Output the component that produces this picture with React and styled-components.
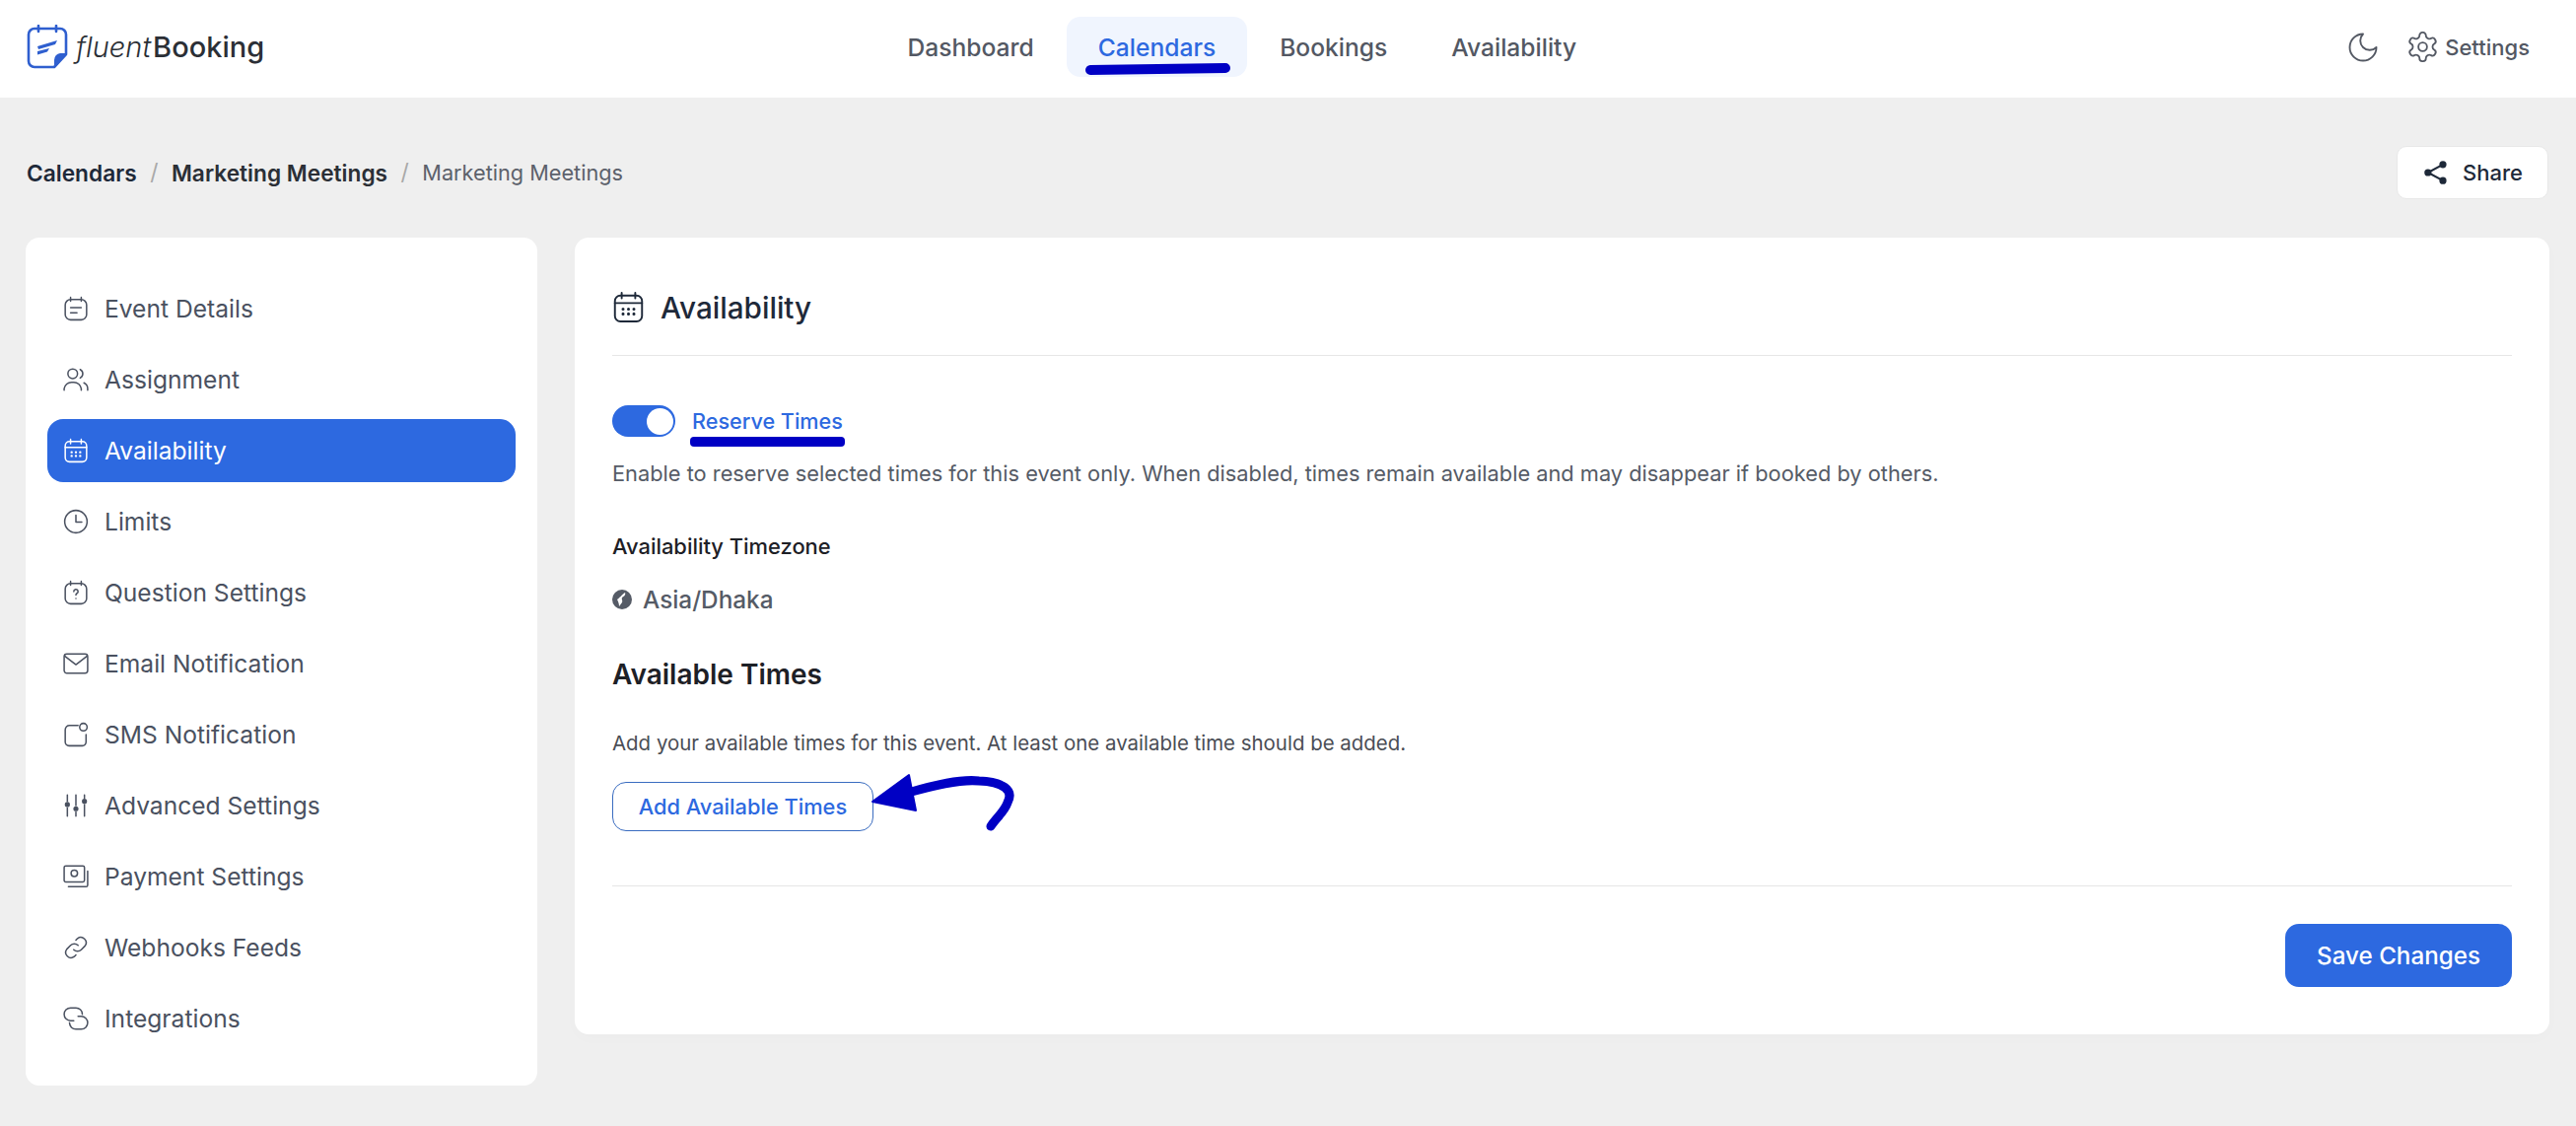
import React from "react";
import styled, { createGlobalStyle } from "styled-components";

const GlobalStyle = createGlobalStyle`
  * { box-sizing: border-box; }
  html, body { margin: 0; padding: 0; }
  body {
    background: #efefef;
    font-family: Inter, "Liberation Sans", sans-serif;
    color: #1e2939;
    -webkit-font-smoothing: antialiased;
  }
`;

const BLUE = "#2d69e0";
const MARK = "#0000c4";

const Page = styled.div`
  width: 2613px;
  min-height: 1142px;
`;

const Header = styled.header`
  height: 99px;
  background: #fff;
  display: flex;
  align-items: center;
  padding: 0 47px 4px 27px;
`;

const Logo = styled.div`
  display: flex;
  align-items: center;
  width: 241px;
  gap: 8px;
  svg { flex: none; }
`;

const LogoText = styled.span`
  font-size: 29px;
  font-weight: 500;
  color: #2b2f36;
  white-space: nowrap;
  em {
    font-weight: 300;
    font-style: italic;
    margin-right: 2px;
  }
`;

const Nav = styled.nav`
  display: flex;
  gap: 2px;
  margin-left: 621px;
`;

const NavItem = styled.a`
  position: relative;
  height: 61px;
  padding: 0 31.5px;
  display: flex;
  align-items: center;
  border-radius: 14px;
  font-size: 24.6px;
  font-weight: 500;
  color: ${(p) => (p.$active ? BLUE : "#535863")};
  background: ${(p) => (p.$active ? "#f0f5fe" : "transparent")};
`;

const NavMark = styled.span`
  position: absolute;
  left: 19px;
  right: 16px;
  top: 48px;
  height: 10px;
  background: ${MARK};
  border-radius: 5px;
  transform: rotate(-0.8deg);
`;

const HeaderRight = styled.div`
  margin-left: auto;
  display: flex;
  align-items: center;
  gap: 25px;
  color: #535863;
  svg { display: block; }
`;

const SettingsLink = styled.a`
  display: flex;
  align-items: center;
  gap: 5px;
  font-size: 22px;
  font-weight: 500;
`;

const CrumbRow = styled.div`
  display: flex;
  align-items: center;
  justify-content: space-between;
  margin: 49px 28px 39px 27px;
  height: 54px;
`;

const Crumbs = styled.div`
  display: flex;
  align-items: center;
`;

const Crumb = styled.span`
  font-size: ${(p) => (p.$plain ? 21.7 : 22.7)}px;
  font-weight: ${(p) => (p.$plain ? 400 : 600)};
  color: ${(p) => p.$color};
`;

const Slash = styled.span`
  color: #a9a9a9;
  font-size: 23px;
  margin: 0 13.5px;
`;

const ShareButton = styled.button`
  width: 154px;
  height: 54px;
  border: 1px solid #e8e8e8;
  border-radius: 10px;
  background: #fff;
  display: flex;
  align-items: center;
  justify-content: center;
  gap: 13px;
  font: 500 22px Inter, sans-serif;
  color: #1e2939;
`;

const Columns = styled.div`
  display: flex;
  gap: 38px;
  align-items: flex-start;
  padding: 0 27px 0 26px;
`;

const Sidebar = styled.aside`
  width: 519px;
  flex: none;
  background: #fff;
  border-radius: 14px;
  padding: 40px 22px 36px;
  display: flex;
  flex-direction: column;
  gap: 8px;
`;

const MenuItem = styled.a`
  height: 64px;
  display: flex;
  align-items: center;
  gap: 16px;
  padding-left: 16px;
  border-radius: 16px;
  font-size: 24.6px;
  color: ${(p) => (p.$active ? "#fff" : "#4a5160")};
  background: ${(p) => (p.$active ? BLUE : "transparent")};
  svg { flex: none; }
`;

const Main = styled.section`
  flex: 1;
  background: #fff;
  border-radius: 14px;
  padding: 38px 38px 48px;
  box-shadow: 0 4px 16px rgba(0, 0, 0, 0.015);
`;

const TitleRow = styled.div`
  height: 82px;
  padding-bottom: 16px;
  display: flex;
  align-items: center;
  gap: 16px;
  border-bottom: 1px solid #e6e6e6;
  color: #1e2939;
`;

const Title = styled.h2`
  margin: 0;
  font-size: 29.7px;
  font-weight: 500;
`;

const ToggleRow = styled.div`
  margin-top: 50px;
  display: flex;
  align-items: center;
  gap: 17px;
  height: 32px;
`;

const Toggle = styled.span`
  width: 64px;
  height: 32px;
  border-radius: 16px;
  background: ${BLUE};
  display: flex;
  align-items: center;
  justify-content: flex-end;
  padding-right: 2px;
  &::after {
    content: "";
    width: 27px;
    height: 27px;
    border-radius: 50%;
    background: #fff;
  }
`;

const ToggleLabel = styled.span`
  position: relative;
  font-size: 21.6px;
  font-weight: 500;
  color: ${BLUE};
  line-height: 32px;
`;

const LabelMark = styled.span`
  position: absolute;
  left: -2px;
  right: -2px;
  top: 32px;
  height: 10px;
  background: ${MARK};
  border-radius: 4px;
`;

const Help = styled.p`
  margin: ${(p) => p.$top}px 0 0;
  font-size: ${(p) => p.$size}px;
  line-height: 36px;
  color: ${(p) => p.$color || "#555b66"};
`;

const FieldLabel = styled.div`
  margin-top: 38px;
  font-size: 21.9px;
  line-height: 36px;
  font-weight: 500;
  color: #1d2026;
`;

const Timezone = styled.div`
  margin-top: 18px;
  display: flex;
  align-items: center;
  gap: 11px;
  font-size: 24.3px;
  line-height: 36px;
  font-weight: 500;
  color: #555b66;
`;

const SectionTitle = styled.h3`
  margin: 38px 0 0;
  font-size: 28px;
  line-height: 40px;
  font-weight: 600;
  color: #1d2026;
`;

const AddWrap = styled.div`
  position: relative;
  margin-top: 21px;
  width: 265px;
`;

const AddButton = styled.button`
  width: 265px;
  height: 50px;
  border: 1px solid #3a6cc0;
  border-radius: 14px;
  background: #fff;
  font: 500 21.8px Inter, sans-serif;
  color: ${BLUE};
`;

const Arrow = styled.svg`
  position: absolute;
  left: 258px;
  top: -12px;
`;

const Footer = styled.div`
  margin-top: 55px;
  padding-top: 38px;
  border-top: 1px solid #e6e6e6;
  display: flex;
  justify-content: flex-end;
`;

const SaveButton = styled.button`
  width: 230px;
  height: 64px;
  border: 0;
  border-radius: 14px;
  background: ${BLUE};
  color: #fff;
  font: 500 24.2px Inter, sans-serif;
`;

const Icon = ({ size = 26, sw = 1.4, children }) => (
  <svg width={size} height={size} viewBox="0 0 24 24" fill="none" stroke="currentColor" strokeWidth={sw} strokeLinecap="round" strokeLinejoin="round">
    {children}
  </svg>
);

const CalendarDots = ({ size, sw }) => (
  <Icon size={size} sw={sw}>
    <rect x="2" y="3.5" width="20" height="19" rx="4" />
    <path d="M7 1.5v4M17 1.5v4M2 9h20" />
    <path d="M8 13.5h.01M12 13.5h.01M16 13.5h.01M8 17h.01M12 17h.01M16 17h.01" strokeWidth="2.2" />
  </Icon>
);

const menu = [
  {
    name: "Event Details",
    icon: (
      <Icon>
        <rect x="2" y="3.5" width="20" height="19" rx="5" />
        <path d="M7 1.5v3.5M17 1.5v3.5M7 11h10M7 16h6" />
      </Icon>
    ),
  },
  {
    name: "Assignment",
    icon: (
      <Icon>
        <circle cx="9" cy="6.5" r="4.5" />
        <path d="M1 22v-1.5a7 7 0 0 1 7-6h2a7 7 0 0 1 7 6V22M16 2.5a4.5 4.5 0 0 1 0 8M19.5 15a6 6 0 0 1 3.5 5.5V22" />
      </Icon>
    ),
  },
  { name: "Availability", active: true, icon: <CalendarDots /> },
  {
    name: "Limits",
    icon: (
      <Icon>
        <circle cx="12" cy="12" r="10.5" />
        <path d="M12 6v6.5h5.5" />
      </Icon>
    ),
  },
  {
    name: "Question Settings",
    icon: (
      <Icon>
        <rect x="2" y="3.5" width="20" height="19" rx="5" />
        <path d="M7 1.5v3.5M17 1.5v3.5M10 11a2 2 0 1 1 3 1.7c-.7.4-1 .8-1 1.5M12 17.5h.01" />
      </Icon>
    ),
  },
  {
    name: "Email Notification",
    icon: (
      <Icon>
        <rect x="1" y="3" width="22" height="18" rx="2.5" />
        <path d="M1.5 5l10.5 8 10.5-8" />
      </Icon>
    ),
  },
  {
    name: "SMS Notification",
    icon: (
      <Icon>
        <path d="M14 3.5H6a4 4 0 0 0-4 4V19a3.5 3.5 0 0 0 3.5 3.5H18a3.5 3.5 0 0 0 3.5-3.5v-7" />
        <circle cx="19" cy="5" r="3.5" />
      </Icon>
    ),
  },
  {
    name: "Advanced Settings",
    icon: (
      <Icon>
        <path d="M4 2v6M4 14v8M12 2v10M12 18v4M20 2v3M20 11v11" />
        <circle cx="4" cy="11" r="1.7" fill="currentColor" />
        <circle cx="12" cy="15" r="1.7" fill="currentColor" />
        <circle cx="20" cy="8" r="1.7" fill="currentColor" />
      </Icon>
    ),
  },
  {
    name: "Payment Settings",
    icon: (
      <Icon>
        <rect x="1" y="2" width="19" height="15" rx="1.5" />
        <circle cx="10.5" cy="9" r="3" />
        <path d="M23 7v13a1.5 1.5 0 0 1-1.5 1.5H5" />
      </Icon>
    ),
  },
  {
    name: "Webhooks Feeds",
    icon: (
      <Icon>
        <path d="M10 14a5 5 0 0 0 7 0l3.5-3.5a5 5 0 0 0-7-7L12 5" />
        <path d="M14 10a5 5 0 0 0-7 0l-3.5 3.5a5 5 0 0 0 7 7L12 19" />
      </Icon>
    ),
  },
  {
    name: "Integrations",
    icon: (
      <Icon>
        <path d="M10 14H7A6 6 0 1 1 7 2h5a6 6 0 0 1 6 6" />
        <path d="M14 10h3a6 6 0 1 1 0 12h-5a6 6 0 0 1-6-6" />
      </Icon>
    ),
  },
];

const FluentLogo = () => (
  <svg width="42" height="45" viewBox="0 0 42 45" fill="none">
    <path d="M8 4h26a6 6 0 0 1 6 6v20L28 43H8a6 6 0 0 1-6-6V10a6 6 0 0 1 6-6z" stroke="#2f5fcf" strokeWidth="2.6" strokeLinejoin="round" />
    <path d="M12 1v6M30 1v6" stroke="#2f5fcf" strokeWidth="2.6" strokeLinecap="round" />
    <path d="M41 29L28 44v-8a7 7 0 0 1 6-7z" fill="#2f5fcf" />
    <path d="M11 22L31 16L29 20L12 25zM11 27L23 24L21 27.5L11 30.5z" fill="#2f5fcf" />
  </svg>
);

const GlobeDot = () => (
  <svg width="20" height="20" viewBox="0 0 20 20">
    <circle cx="10" cy="10" r="10" fill="#555b66" />
    <path d="M13 3c1 2-1 4-3 5-1 2 1 3 0 5-1 1-2 3-3 4 0-3-1-5-2-7 2-1 5-5 8-7z" fill="#fff" />
  </svg>
);

export default function App() {
  return (
    <Page>
      <GlobalStyle />
      <Header>
        <Logo>
          <FluentLogo />
          <LogoText>
            <em>fluent</em>Booking
          </LogoText>
        </Logo>
        <Nav>
          <NavItem>Dashboard</NavItem>
          <NavItem $active>
            Calendars
            <NavMark />
          </NavItem>
          <NavItem>Bookings</NavItem>
          <NavItem>Availability</NavItem>
        </Nav>
        <HeaderRight>
          <Icon size={36} sw={1.25}>
            <path d="M12 3a6 6 0 0 0 9 9 9 9 0 1 1-9-9z" />
          </Icon>
          <SettingsLink>
            <Icon size={35} sw={1.25}>
              <path d="M12.22 2h-.44a2 2 0 0 0-2 2v.18a2 2 0 0 1-1 1.73l-.43.25a2 2 0 0 1-2 0l-.15-.08a2 2 0 0 0-2.73.73l-.22.38a2 2 0 0 0 .73 2.73l.15.1a2 2 0 0 1 1 1.72v.51a2 2 0 0 1-1 1.74l-.15.09a2 2 0 0 0-.73 2.73l.22.38a2 2 0 0 0 2.73.73l.15-.08a2 2 0 0 1 2 0l.43.25a2 2 0 0 1 1 1.73V20a2 2 0 0 0 2 2h.44a2 2 0 0 0 2-2v-.18a2 2 0 0 1 1-1.73l.43-.25a2 2 0 0 1 2 0l.15.08a2 2 0 0 0 2.73-.73l.22-.39a2 2 0 0 0-.73-2.73l-.15-.08a2 2 0 0 1-1-1.74v-.5a2 2 0 0 1 1-1.74l.15-.09a2 2 0 0 0 .73-2.73l-.22-.38a2 2 0 0 0-2.73-.73l-.15.08a2 2 0 0 1-2 0l-.43-.25a2 2 0 0 1-1-1.73V4a2 2 0 0 0-2-2z" />
              <circle cx="12" cy="12" r="3" />
            </Icon>
            Settings
          </SettingsLink>
        </HeaderRight>
      </Header>

      <CrumbRow>
        <Crumbs>
          <Crumb $color="#1e2939">Calendars</Crumb>
          <Slash>/</Slash>
          <Crumb $color="#2b2f36">Marketing Meetings</Crumb>
          <Slash>/</Slash>
          <Crumb $plain $color="#5c616b">Marketing Meetings</Crumb>
        </Crumbs>
        <ShareButton>
          <svg width="28" height="28" viewBox="0 0 24 24" fill="currentColor" stroke="currentColor" strokeWidth="1.8">
            <path d="M18 5L5 12l13 7" fill="none" />
            <circle cx="18" cy="5" r="2.2" />
            <circle cx="5" cy="12" r="2.2" />
            <circle cx="18" cy="19" r="2.2" />
          </svg>
          Share
        </ShareButton>
      </CrumbRow>

      <Columns>
        <Sidebar>
          {menu.map((item) => (
            <MenuItem key={item.name} $active={item.active}>
              {item.icon}
              {item.name}
            </MenuItem>
          ))}
        </Sidebar>
        <Main>
          <TitleRow>
            <CalendarDots size={33} sw={1.4} />
            <Title>Availability</Title>
          </TitleRow>
          <ToggleRow>
            <Toggle />
            <ToggleLabel>
              Reserve Times
              <LabelMark />
            </ToggleLabel>
          </ToggleRow>
          <Help $top={19} $size={21.8}>
            Enable to reserve selected times for this event only. When disabled, times remain available and may disappear if booked by others.
          </Help>
          <FieldLabel>Availability Timezone</FieldLabel>
          <Timezone>
            <GlobeDot />
            Asia/Dhaka
          </Timezone>
          <SectionTitle>Available Times</SectionTitle>
          <Help $top={32} $size={20.45} $color="#4a4d55">
            Add your available times for this event. At least one available time should be added.
          </Help>
          <AddWrap>
            <AddButton>Add Available Times</AddButton>
            <Arrow width="160" height="70" viewBox="0 0 160 70" fill="none">
              <path d="M6 32L43 5L50 41z" fill={MARK} stroke={MARK} strokeWidth="2" strokeLinejoin="round" />
              <path d="M42 23C70 15 95 9 114 11C138 12 150 20 143 33C140 42 132 48 126 57" stroke={MARK} strokeWidth="9" strokeLinecap="round" />
            </Arrow>
          </AddWrap>
          <Footer>
            <SaveButton>Save Changes</SaveButton>
          </Footer>
        </Main>
      </Columns>
    </Page>
  );
}
